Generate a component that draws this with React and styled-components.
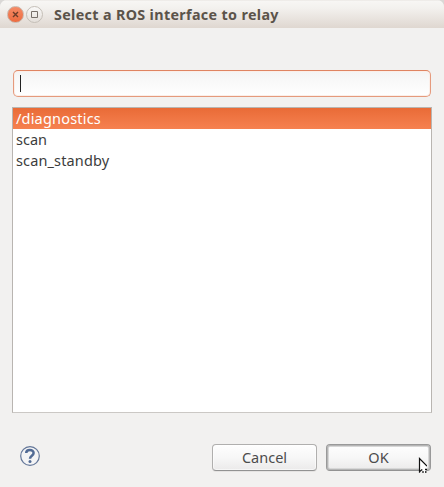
import React, { useState } from 'react';
import styled, { createGlobalStyle } from 'styled-components';

const GlobalStyle = createGlobalStyle`
  * { box-sizing: border-box; }
  html, body { margin: 0; padding: 0; background: #dad8d6; }
  body { font-family: "Noto Sans", "Open Sans", sans-serif; font-size: 14.5px; color: #3c3c3c; overflow: hidden; }
`;

const Window = styled.main`
  position: relative;
  display: flex;
  flex-direction: column;
  width: 444px;
  height: 487px;
  background: #f2f1f0;
  border-radius: 7px 7px 0 0;
  overflow: hidden;
`;

const TitleBar = styled.header`
  display: flex;
  align-items: center;
  flex: none;
  height: 28px;
  padding: 1px 0 0 7px;
  background: linear-gradient(#e6e2de 0, #f7f6f4 1px, #f3f1ee 8px, #dfd7d0 100%);
`;

const WindowButton = styled.button`
  display: flex;
  flex: none;
  width: 17px;
  height: 17px;
  margin: 0 2px 0 0;
  padding: 0;
  border: 1px solid ${(p) => (p.$close ? '#c9b5ab' : '#c4beb7')};
  border-radius: 50%;
  background: ${(p) => (p.$close ? 'linear-gradient(#f58b66, #ed6b3f)' : 'linear-gradient(#faf9f8, #e4dfda)')};
  svg { display: block; }
`;

const Title = styled.h1`
  margin: 0 0 0 9px;
  font-size: 14.3px;
  line-height: 20px;
  font-weight: 700;
  letter-spacing: 0.35px;
  white-space: nowrap;
  color: #5b534a;
`;

const Content = styled.section`
  display: flex;
  flex-direction: column;
  padding: 42px 12px 0;
`;

const Filter = styled.div`
  display: flex;
  align-items: center;
  height: 27px;
  margin: 0 1px;
  padding-left: 6px;
  border: 1px solid #e59a7d;
  border-top-color: #df8462;
  border-radius: 5px;
  background: linear-gradient(#f4f4f4, #ffffff);
  box-shadow: inset 0 0 0 1px #fbefe9;
`;

const Caret = styled.span`
  width: 1px;
  height: 17px;
  background: #222;
`;

const List = styled.ul`
  height: 306px;
  margin: 10px 0 0;
  padding: 0;
  list-style: none;
  border: 1px solid #b9b5b1;
  border-bottom-color: #cbc8c5;
  background: #fff;
`;

const Row = styled.li`
  height: 21px;
  padding-left: 3px;
  line-height: 21px;
  letter-spacing: ${(p) => p.$tracking}px;
  white-space: nowrap;
  color: ${(p) => (p.$selected ? '#fff' : '#3c3c3c')};
  background: ${(p) => (p.$selected ? 'linear-gradient(#e96b37, #f68150)' : 'transparent')};
`;

const Footer = styled.footer`
  display: flex;
  align-items: center;
  gap: 9px;
  height: 27px;
  margin: 31px 13px 0 20px;
`;

const Help = styled.button`
  display: flex;
  width: 20px;
  height: 20px;
  margin: -3px auto 0 0;
  padding: 0;
  border: 0;
  background: none;
`;

const Button = styled.button`
  width: 105px;
  height: 27px;
  padding: 0 0 1px;
  font: inherit;
  line-height: 24px;
  color: #4c4c4c;
  border: 1px solid ${(p) => (p.$primary ? '#999' : '#b0afae')};
  border-bottom-color: #929292;
  border-radius: 4px;
  background: linear-gradient(#fefefe, #f7f7f7 50%, #ebeaea);
  box-shadow: ${(p) => (p.$primary ? 'inset 0 0 0 1px #b5b5b5, inset 0 0 0 2px #d7d7d7' : 'inset 0 0 0 1px rgba(255,255,255,.55), 0 1px #e5e3e2')};
`;

const Pointer = styled.svg`
  position: absolute;
  left: 418px;
  top: 457px;
`;

const items = [
  { name: '/diagnostics', tracking: 0.19 },
  { name: 'scan', tracking: 0 },
  { name: 'scan_standby', tracking: 0.13 },
];

export default function App() {
  const [selected, setSelected] = useState('/diagnostics');
  return (
    <>
      <GlobalStyle />
      <Window>
        <TitleBar>
          <WindowButton $close aria-label="Close">
            <svg width="15" height="15"><path d="M5 5l5 5M10 5l-5 5" stroke="#6b3c29" strokeWidth="1.4" /></svg>
          </WindowButton>
          <WindowButton aria-label="Maximize">
            <svg width="15" height="15"><path d="M4.5 4.5h6v6h-6z" fill="none" stroke="#77706a" /></svg>
          </WindowButton>
          <Title>Select a ROS interface to relay</Title>
        </TitleBar>
        <Content>
          <Filter><Caret /></Filter>
          <List>
            {items.map(({ name, tracking }) => (
              <Row key={name} $tracking={tracking} $selected={name === selected} onClick={() => setSelected(name)}>{name}</Row>
            ))}
          </List>
        </Content>
        <Footer>
          <Help aria-label="Help">
            <svg width="20" height="20" fill="none">
              <circle cx="10" cy="10" r="9.3" fill="#f4f4f5" stroke="#647799" strokeWidth="1.2" />
              <path d="M6.2 7C6.2 2.9 13.7 2.9 13.6 7c0 2.8-3.6 2.7-3.6 5.8" stroke="#526b95" strokeWidth="2.5" />
              <circle cx="10" cy="15.5" r="1.5" fill="#526b95" />
            </svg>
          </Help>
          <Button>Cancel</Button>
          <Button $primary>OK</Button>
        </Footer>
        <Pointer width="9" height="16">
          <path d="M1.5 1.5L9 9v3H7l1.5 4H5.5L4 12.7 1.5 15z" fill="#fff" />
          <path d="M1.5 15.8V1.5L9 9.2M1.5 14.8L4.2 12.4M5 14v2M7 12.4h2M7.8 14v2" fill="none" stroke="#111" strokeWidth="1.2" />
        </Pointer>
      </Window>
    </>
  );
}
